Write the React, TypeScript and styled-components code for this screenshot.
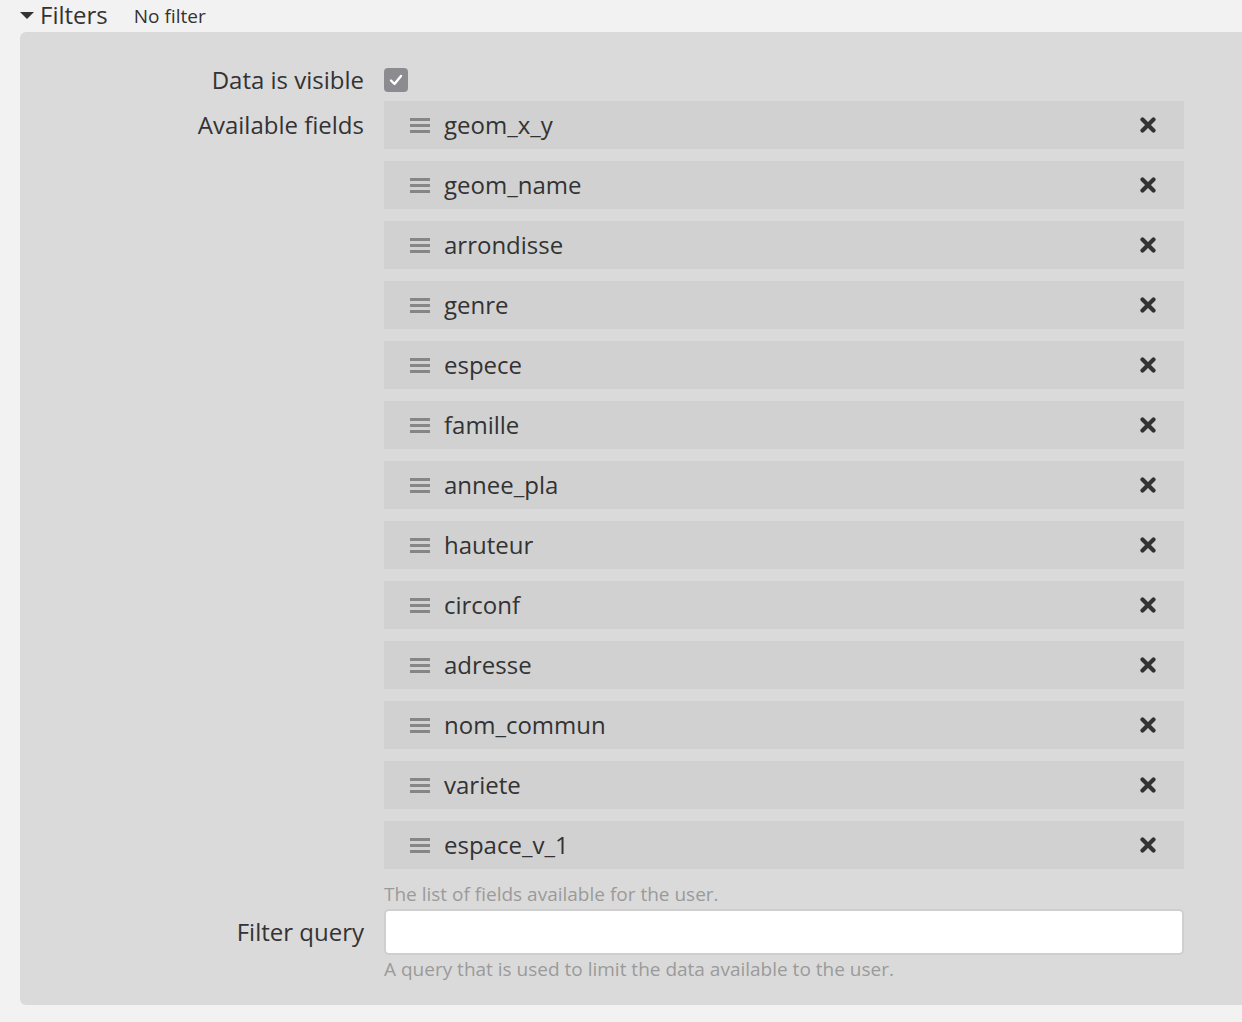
import styled, { createGlobalStyle } from 'styled-components'

const GlobalStyle = createGlobalStyle`
  html, body {
    margin: 0;
    padding: 0;
    background: #f2f2f2;
    overflow: hidden;
  }
  body {
    font-family: "Open Sans", "Liberation Sans", sans-serif;
    color: #333;
  }
`

const Page = styled.div`
  width: 1242px;
  height: 1022px;
  background: #f2f2f2;
`

const Header = styled.div`
  display: flex;
  align-items: center;
  height: 32px;
  padding-left: 20px;
`

const Caret = styled.span`
  width: 0;
  height: 0;
  border-left: 7px solid transparent;
  border-right: 7px solid transparent;
  border-top: 7px solid #333;
  margin-right: 6px;
  margin-top: -2px;
`

const Title = styled.span`
  font-size: 24px;
  line-height: 32px;
  margin-top: -2px;
  color: #333;
`

const Summary = styled.span`
  font-size: 19px;
  margin-left: 26px;
  line-height: 32px;
  color: #333;
`

const Panel = styled.div`
  margin-left: 20px;
  background: #dadada;
  border-radius: 6px 0 0 6px;
  padding: 36px 0 24px;
  display: grid;
  grid-template-columns: 344px 800px;
  column-gap: 20px;
  align-items: start;
`

const Label = styled.label<{ $height: number }>`
  text-align: right;
  font-size: 24px;
  line-height: ${({ $height }) => $height}px;
  color: #333;
  white-space: nowrap;
`

const Field = styled.div<{ $space?: number }>`
  display: flex;
  flex-direction: column;
  margin-bottom: ${({ $space }) => $space ?? 0}px;
`

const Checkbox = styled.span`
  width: 24px;
  height: 24px;
  border-radius: 4px;
  background: #8c8c90;
  display: flex;
  align-items: center;
  justify-content: center;
`

const List = styled.ul`
  list-style: none;
  margin: 0;
  padding: 0;
  display: flex;
  flex-direction: column;
  gap: 12px;
`

const Item = styled.li`
  height: 48px;
  background: #d1d1d1;
  display: flex;
  align-items: center;
  padding: 0 28px 0 26px;
  font-size: 24px;
  color: #333;
`

const Handle = styled.span`
  width: 20px;
  display: flex;
  flex-direction: column;
  gap: 3px;
  margin-right: 14px;

  i {
    display: block;
    height: 3px;
    background: #868686;
  }
`

const Name = styled.span`
  flex: 1;
  margin-top: -2px;
`

const Remove = styled.span`
  width: 16px;
  height: 16px;
  display: flex;
`

const Help = styled.div<{ $top: number }>`
  font-size: 19px;
  line-height: 24px;
  color: #9a9a9a;
  margin-top: ${({ $top }) => $top}px;
`

const Input = styled.input`
  box-sizing: border-box;
  width: 800px;
  height: 46px;
  margin-top: 3px;
  border: 2px solid #cfcfcf;
  border-radius: 5px;
  background: #fff;
  font-family: inherit;
  font-size: 18px;
  padding: 0 10px;
  outline: none;
`

const fields = [
  'geom_x_y',
  'geom_name',
  'arrondisse',
  'genre',
  'espece',
  'famille',
  'annee_pla',
  'hauteur',
  'circonf',
  'adresse',
  'nom_commun',
  'variete',
  'espace_v_1',
]

export default function App(): JSX.Element {
  return (
    <Page>
      <GlobalStyle />
      <Header>
        <Caret />
        <Title>Filters</Title>
        <Summary>No filter</Summary>
      </Header>
      <Panel>
        <Label $height={24}>Data is visible</Label>
        <Field $space={9}>
          <Checkbox>
            <svg width="16" height="16" viewBox="0 0 16 16">
              <path
                d="M3 8.5 L6.5 12 L13 4"
                fill="none"
                stroke="#fff"
                strokeWidth="2.4"
                strokeLinecap="round"
                strokeLinejoin="round"
              />
            </svg>
          </Checkbox>
        </Field>

        <Label $height={48}>Available fields</Label>
        <Field>
          <List>
            {fields.map((name) => (
              <Item key={name}>
                <Handle>
                  <i />
                  <i />
                  <i />
                </Handle>
                <Name>{name}</Name>
                <Remove>
                  <svg width="16" height="16" viewBox="0 0 16 16">
                    <path
                      d="M2.5 2.5 L13.5 13.5 M13.5 2.5 L2.5 13.5"
                      stroke="#333"
                      strokeWidth="4.2"
                      strokeLinecap="round"
                    />
                  </svg>
                </Remove>
              </Item>
            ))}
          </List>
          <Help $top={13}>The list of fields available for the user.</Help>
        </Field>

        <Label $height={52}>Filter query</Label>
        <Field>
          <Input type="text" />
          <Help $top={2}>
            A query that is used to limit the data available to the user.
          </Help>
        </Field>
      </Panel>
    </Page>
  )
}
